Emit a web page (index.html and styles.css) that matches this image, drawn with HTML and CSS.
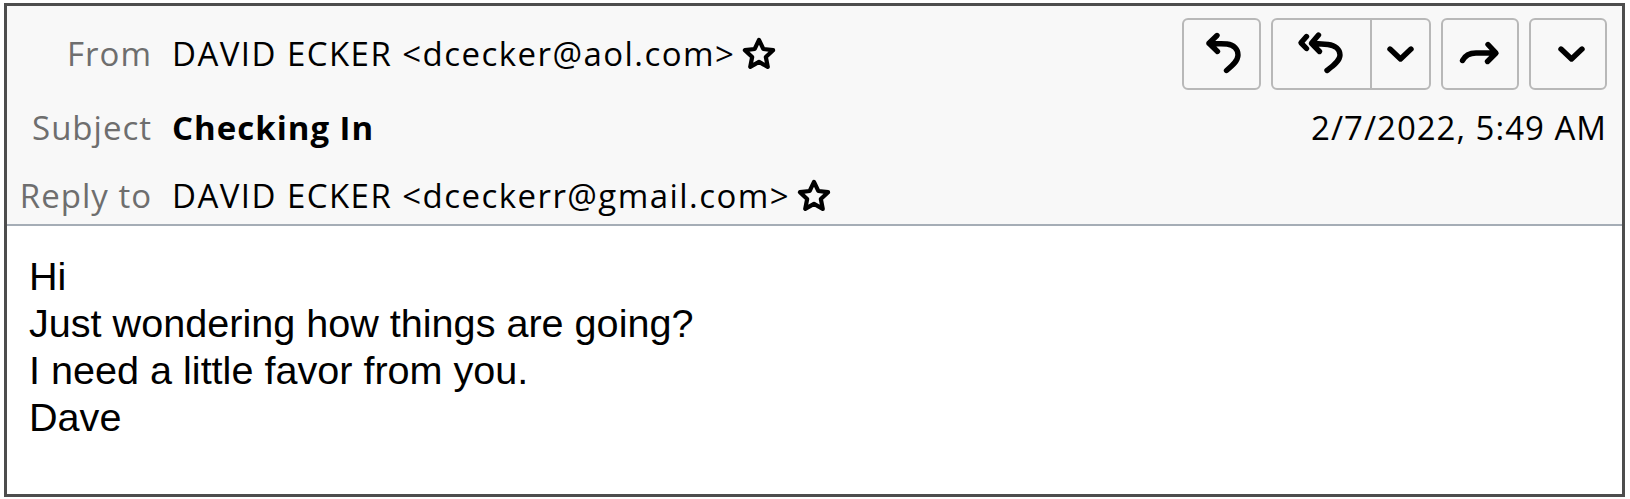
FILE: index.html
```html
<!DOCTYPE html>
<html lang="en">
<head>
<meta charset="utf-8">
<title>Message</title>
<link rel="stylesheet" href="styles.css">
</head>
<body>
<div class="msg">
  <div class="header">
    <div class="row row-top">
      <span class="label">From</span>
      <span class="value">DAVID ECKER &lt;dcecker@aol.com&gt;</span>
      <svg class="star" width="36" height="36" viewBox="0 0 24 24"><path d="M12 2.6l2.85 6.05 6.55.8-4.85 4.55 1.3 6.55L12 17.3l-5.85 3.25 1.3-6.55L2.6 9.45l6.55-.8z"/></svg>
      <div class="actions">
        <div class="btn btn-reply">
          <svg width="75" height="68" viewBox="2 2 75 68"><path d="M35 17.5 L27 25.3 L35.5 33.5 M27 25.3 L45 26 C52 27 56 31 56 37 C56 43 50 48 44.5 52.5"/></svg>
        </div>
        <div class="btn btn-split">
          <div class="part part-main">
            <svg width="97" height="68" viewBox="2 2 97 68"><path d="M35.5 18.5 L30 24.8 L35.5 30.5 M47.5 17 L40.5 25.3 L48.5 33.5 M40.5 25.3 L57 26.5 C64.5 27.5 69 31.5 69 37 C69 43 62 48 56 52.5"/></svg>
          </div>
          <div class="part part-menu">
            <svg width="57" height="68" viewBox="101 2 57 68"><path d="M119 31 L129.5 41 L140 31"/></svg>
          </div>
        </div>
        <div class="btn btn-forward">
          <svg width="73" height="68" viewBox="2 2 73 68"><path d="M21.5 42.5 C24 37.5 28 35 35 35 H54.5 M47 26.5 L55 35 L46.5 43.5"/></svg>
        </div>
        <div class="btn btn-more">
          <svg width="73" height="68" viewBox="2 2 73 68"><path d="M32 31 L42.5 41 L53 31"/></svg>
        </div>
      </div>
    </div>
    <div class="row row-subject">
      <span class="label">Subject</span>
      <span class="value subject">Checking In</span>
      <span class="date">2/7/2022, 5:49 AM</span>
    </div>
    <div class="row row-reply">
      <span class="label">Reply to</span>
      <span class="value">DAVID ECKER &lt;dceckerr@gmail.com&gt;</span>
      <svg class="star" width="36" height="36" viewBox="0 0 24 24"><path d="M12 2.6l2.85 6.05 6.55.8-4.85 4.55 1.3 6.55L12 17.3l-5.85 3.25 1.3-6.55L2.6 9.45l6.55-.8z"/></svg>
    </div>
  </div>
  <div class="body">
    <div class="line">Hi</div>
    <div class="line">Just wondering how things are going?</div>
    <div class="line">I need a little favor from you.</div>
    <div class="line">Dave</div>
  </div>
</div>
</body>
</html>
```

FILE: styles.css
```css
html, body {
  margin: 0;
  padding: 0;
  background: #ffffff;
}

.msg {
  margin: 3px 0 0 4px;
  width: 1621px;
  height: 494px;
  box-sizing: border-box;
  border: 3px solid #4d4d4d;
  display: flex;
  flex-direction: column;
  background: #ffffff;
}

.header {
  box-sizing: border-box;
  height: 220px;
  background: #f8f8f8;
  border-bottom: 2px solid #a5adb6;
  padding: 12px 15px 6px 0;
  font-family: "Open Sans", "Noto Sans", sans-serif;
  font-size: 33px;
  letter-spacing: 1.45px;
  color: #000000;
}

.row {
  display: flex;
  align-items: center;
  line-height: 44px;
  height: 44px;
}

.row-top {
  height: 72px;
}

.row-subject {
  margin-top: 16px;
}

.row-reply {
  margin-top: 24px;
}

.label {
  width: 145px;
  flex: none;
  text-align: right;
  color: #6e6e6e;
  letter-spacing: 1px;
}

.value {
  margin-left: 20px;
  white-space: nowrap;
}

.subject {
  font-weight: 700;
  letter-spacing: 1px;
}

.star {
  flex: none;
  margin-left: 6px;
  fill: none;
  stroke: #000000;
  stroke-width: 2.8;
  stroke-linejoin: round;
}

.date {
  margin-left: auto;
  white-space: nowrap;
  letter-spacing: 1px;
}

.actions {
  margin-left: auto;
  display: flex;
  gap: 10px;
  height: 72px;
}

.btn {
  box-sizing: border-box;
  height: 72px;
  border: 2px solid #b8b8b8;
  border-radius: 6px;
  background: #f8f8f8;
  display: flex;
}

.btn svg {
  display: block;
  fill: none;
  stroke: #000000;
  stroke-width: 5.4;
  stroke-linecap: round;
  stroke-linejoin: round;
}

.btn-reply {
  width: 79px;
}

.btn-split {
  width: 160px;
}

.part-main {
  width: 97px;
}

.part-menu {
  width: 57px;
  border-left: 2px solid #b8b8b8;
}

.btn-forward,
.btn-more {
  width: 78px;
}

.body {
  flex: 1;
  padding: 27px 0 0 22px;
  font-family: "Liberation Sans", Arial, sans-serif;
  font-size: 39.6px;
  line-height: 47px;
  color: #000000;
}
```
